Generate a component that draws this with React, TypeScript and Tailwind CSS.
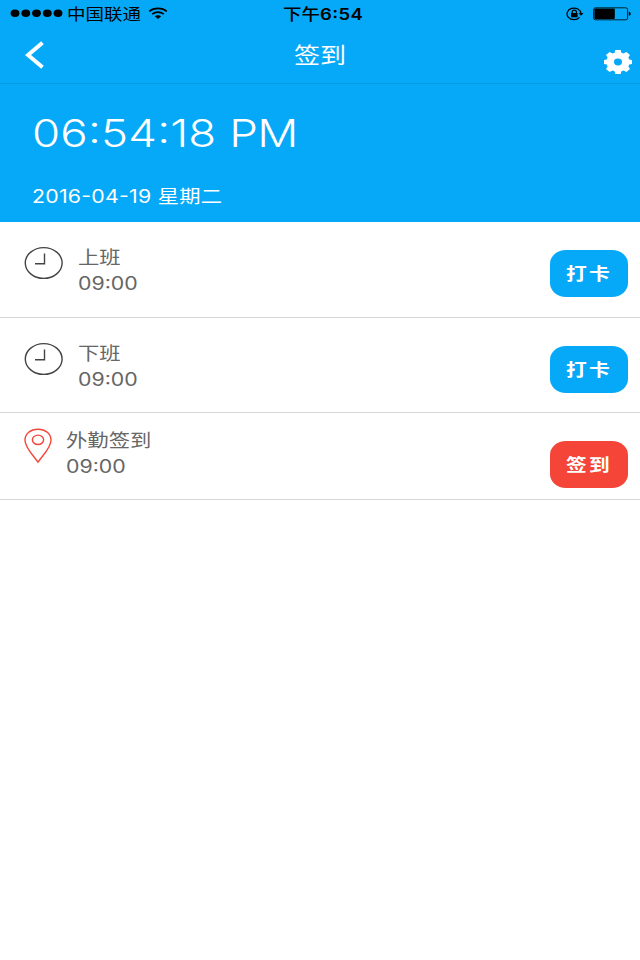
import { ReactNode } from 'react';
import classNames from 'clsx';

interface Punch {
  title: string;
  time: string;
  action: string;
  outside?: boolean;
}

const punches: Punch[] = [
  { title: '上班', time: '09:00', action: '打卡' },
  { title: '下班', time: '09:00', action: '打卡' },
  { title: '外勤签到', time: '09:00', action: '签到', outside: true },
];

// extended lettering, used for every label on the screen
function Wide({ className, children }: { className?: string; children: ReactNode }) {
  return (
    <span
      className={classNames(
        'block w-max origin-left scale-x-[1.185] whitespace-nowrap',
        className
      )}
    >
      {children}
    </span>
  );
}

function StatusBar() {
  return (
    <div className="grid h-7 grid-cols-[283px_1fr_74px] items-center text-black">
      <div className="flex items-center pl-[10px]">
        <svg className="mb-[3px]" width="54" height="10" viewBox="0 0 54 10">
          {[5, 15.8, 26.5, 37.3, 48].map((cx) => (
            <ellipse key={cx} cx={cx} cy="5.2" rx="4.4" ry="3.7" />
          ))}
        </svg>
        <Wide className="ml-[3px] text-[15.6px] leading-[29px]">中国联通</Wide>
        <svg className="mb-[3px] ml-[19px]" width="20" height="13" viewBox="0 0 20 13">
          <g fill="none" stroke="black" strokeWidth="1.7">
            <path d="M1.2 4.3C6 .4 14 .4 18.8 4.3" />
            <path d="M4.2 7.2C7.5 4.4 12.5 4.4 15.8 7.2" />
          </g>
          <path d="M6.8 9.3C8.6 7.8 11.4 7.8 13.2 9.3L10 12Z" />
        </svg>
      </div>
      <Wide className="text-[15.6px] font-medium leading-[29px]">
        下午<span className="font-semibold tracking-[.3px]">6:54</span>
      </Wide>
      <div className="mb-[2px] flex items-center">
        <svg width="18" height="14" viewBox="0 0 18 14">
          <g fill="none" stroke="black" strokeWidth="1.2">
            <path d="M13.6 10.4A7 5.8 0 1 1 15 6.6" />
            <path d="M6.2 6.4V5A2.1 1.9 0 0 1 10.4 5V6.4" />
          </g>
          <path d="M5 6H11.6V10.2H5ZM12.5 6H17.5L15 8.8Z" />
        </svg>
        <svg className="ml-[9px]" width="39" height="14" viewBox="0 0 39 14">
          <rect x=".6" y=".8" width="34" height="12" rx="1.8" fill="none" stroke="black" strokeWidth=".8" />
          <rect x="1.4" y="1.6" width="20.4" height="10.4" rx="1" />
          <path d="M35.8 4.8C38.4 5 38.4 8.6 35.8 8.8Z" />
        </svg>
      </div>
    </div>
  );
}

function GearIcon() {
  return (
    <svg width="28" height="24" viewBox="0 0 28 24" fill="white">
      <path
        fillRule="evenodd"
        d="M11.3 0H16.7L17.4 2.7L19.5 3.4L22.4 1.9L26 4.9L24.4 7.6L25.2 9.4L28 10V14L25.2 14.6L24.4 16.4L26 19.1L22.4 22.1L19.5 20.6L17.4 21.3L16.7 24H11.3L10.6 21.3L8.5 20.6L5.6 22.1L2 19.1L3.6 16.4L2.8 14.6L0 14V10L2.8 9.4L3.6 7.6L2 4.9L5.6 1.9L8.5 3.4L10.6 2.7ZM14 8.6A4 3.4 0 1 0 14 15.4A4 3.4 0 1 0 14 8.6Z"
      />
    </svg>
  );
}

function NavBar() {
  return (
    <div className="grid h-14 grid-cols-[269px_1fr_28px] border-b border-[#0a9ae0] pr-2 pl-[25px]">
      <svg className="mt-[13px]" width="20" height="28" viewBox="0 0 20 28">
        <path d="M17.5 1.8L3 14L17.5 26.2" fill="none" stroke="white" strokeWidth="4" />
      </svg>
      <Wide className="text-[22px] leading-[54px]">签到</Wide>
      <div className="mt-[21.5px]">
        <GearIcon />
      </div>
    </div>
  );
}

function ClockIcon() {
  return (
    <svg className="shrink-0" width="40" height="34" viewBox="0 0 40 34" fill="none" stroke="#444">
      <ellipse cx="19.7" cy="17" rx="18.4" ry="15.4" strokeWidth="1.4" />
      <path d="M20.5 7.5V17.8H11" strokeWidth="1.4" />
    </svg>
  );
}

function PinIcon() {
  return (
    <svg className="shrink-0" width="28" height="36" viewBox="0 0 28 36" fill="none" stroke="#f44538" strokeWidth="1.4">
      <path d="M14 34.2C10 28 1 20 1 12.2C1 5.8 6.6 1.2 14 1.2S27 5.8 27 12.2C27 20 18 28 14 34.2Z" />
      <ellipse cx="14" cy="11.8" rx="5.6" ry="4.7" />
    </svg>
  );
}

function PunchRow({ punch }: { punch: Punch }) {
  return (
    <div
      className={classNames(
        'flex border-b border-[#d6d6d6] pr-3 pl-6',
        punch.outside ? 'h-[87px]' : 'h-[95.5px]'
      )}
    >
      <div className={punch.outside ? 'pt-[15px]' : 'pt-6'}>
        {punch.outside ? <PinIcon /> : <ClockIcon />}
      </div>
      <div
        className={classNames(
          'grow pl-[14px] text-lg leading-[26px] text-[#666]',
          punch.outside ? 'pt-[15px]' : 'pt-[23px]'
        )}
      >
        <Wide>{punch.title}</Wide>
        <Wide>{punch.time}</Wide>
      </div>
      <button
        className={classNames(
          'mt-[28px] flex h-[47px] w-[78px] rounded-[16px/14px] pl-[15.5px] text-[17.5px] font-bold leading-[48px] text-white',
          punch.outside ? 'bg-[#f44538]' : 'bg-[#05a9f7]'
        )}
      >
        <Wide className="tracking-[2px]">{punch.action}</Wide>
      </button>
    </div>
  );
}

export default function App() {
  return (
    <div className="h-[960px] w-[640px] overflow-hidden bg-white font-['Inter','Noto_Sans_CJK_SC',sans-serif] [font-feature-settings:'case']">
      <div className="h-[222px] bg-[#05a9f7] text-white">
        <StatusBar />
        <NavBar />
        <div className="pl-[31.5px]">
          <Wide className="pt-6 text-[38.5px] font-[350] leading-[50px]">
            <span className="tracking-[.15px]">06:54:18</span> <span className="tracking-[-.6px]">PM</span>
          </Wide>
          <Wide className="pt-[26px] text-lg leading-[26px] tracking-[.2px]">2016-04-19 星期二</Wide>
        </div>
      </div>
      {punches.map((punch) => (
        <PunchRow key={punch.title} punch={punch} />
      ))}
    </div>
  );
}
